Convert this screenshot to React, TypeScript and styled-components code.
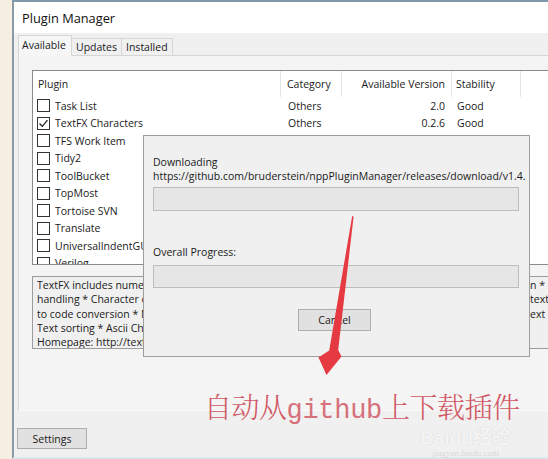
import React from "react";
import styled, { createGlobalStyle } from "styled-components";

const Global = createGlobalStyle`
  html, body { margin: 0; padding: 0; overflow: hidden; }
  body {
    width: 548px; height: 459px; background: #f4efe1;
    font-family: "Open Sans", "Noto Sans", sans-serif;
  }
  #root { position: relative; width: 548px; height: 459px; overflow: hidden; }
`;

const Window = styled.div`
  margin-left: 12px;
  width: 600px;
  height: 459px;
  box-sizing: border-box;
  border-left: 2px solid #8d9aa6;
  border-top: 2px solid #7f98ab;
  border-bottom: 2px solid #dce6ee;
  display: flex;
  flex-direction: column;
  background: #f0f0f0;
`;

const TitleBar = styled.div`
  height: 31px;
  background: #ffffff;
  display: flex;
  align-items: center;
  padding-left: 8px;
  font-size: 12.8px;
  color: #111;
`;

const Body = styled.div`
  flex: 1;
  display: flex;
  flex-direction: column;
  padding: 2px 0 0 4px;
  font-size: 10.5px;
  color: #1a1a1a;
`;

const TabsRow = styled.div`
  display: flex;
  align-items: flex-end;
  height: 21px;
  margin-bottom: -1px;
  position: relative;
  z-index: 1;
`;

const Tab = styled.div<{ $active?: boolean; $w: number }>`
  width: ${(p) => p.$w}px;
  box-sizing: border-box;
  height: ${(p) => (p.$active ? 21 : 18)}px;
  border: 1px solid #d6d6d6;
  border-bottom: ${(p) => (p.$active ? "none" : "1px solid #d6d6d6")};
  border-left: ${(p) => (p.$active ? "1px solid #d6d6d6" : "none")};
  background: ${(p) => (p.$active ? "#f6f6f6" : "#f0f0f0")};
  display: flex;
  align-items: center;
  padding-left: ${(p) => (p.$active ? 3 : 4)}px;
  padding-bottom: ${(p) => (p.$active ? 2 : 0)}px;
  color: #1a1a1a;
`;

const TabPanel = styled.div`
  height: 356px;
  box-sizing: border-box;
  border: 1px solid #d6d6d6;
  border-bottom: 1px solid #fafafa;
  background: #f4f4f4;
  padding: 14px 0 0 13px;
  display: flex;
  flex-direction: column;
  gap: 11px;
`;

const List = styled.div`
  height: 195px;
  box-sizing: border-box;
  border: 1px solid #8a8a8a;
  background: #ffffff;
  overflow: hidden;
`;

const Grid = styled.div`
  display: grid;
  grid-template-columns: 248px 61px 110px 69px 1fr;
`;

const HeadCell = styled.div<{ $align?: "right"; $pl?: number }>`
  height: 26px;
  box-sizing: border-box;
  border-right: 1px solid #e6e6e6;
  display: flex;
  align-items: center;
  justify-content: ${(p) => (p.$align === "right" ? "flex-end" : "flex-start")};
  padding-left: ${(p) => p.$pl ?? 0}px;
  padding-right: ${(p) => (p.$align === "right" ? 6 : 0)}px;
  white-space: nowrap;
  color: #1a1a1a;
`;

const Cell = styled.div<{ $align?: "right"; $pl?: number }>`
  height: 17.5px;
  display: flex;
  align-items: center;
  justify-content: ${(p) => (p.$align === "right" ? "flex-end" : "flex-start")};
  padding-left: ${(p) => p.$pl ?? 0}px;
  padding-right: ${(p) => (p.$align === "right" ? 7 : 0)}px;
  white-space: nowrap;
  overflow: hidden;
`;

const Check = styled.span`
  width: 13px;
  height: 13px;
  box-sizing: border-box;
  border: 1px solid #333;
  background: #fff;
  margin-right: 5px;
  flex: none;
  display: flex;
  align-items: center;
  justify-content: center;
`;

const Desc = styled.div`
  height: 73px;
  box-sizing: border-box;
  border: 1px solid #9c9c9c;
  background: #f0f0f0;
  padding: 1px 0 0 4px;
  line-height: 14.3px;
  overflow: hidden;
`;

const DescLine = styled.div`
  display: grid;
  grid-template-columns: 493px auto;
  white-space: nowrap;
  span { overflow: hidden; }
`;

const Footer = styled.div`
  padding: 17px 0 0 0;
  margin-left: -1px;
`;

const Button = styled.div<{ $w: number; $h: number }>`
  width: ${(p) => p.$w}px;
  height: ${(p) => p.$h}px;
  box-sizing: border-box;
  border: 1px solid #adadad;
  background: #e1e1e1;
  display: flex;
  align-items: center;
  justify-content: center;
  font-size: 10.5px;
  color: #1a1a1a;
`;

const Dialog = styled.div`
  position: absolute;
  left: 143px;
  top: 135px;
  width: 387px;
  height: 222px;
  box-sizing: border-box;
  border: 1px solid #9d9d9d;
  background: #f0f0f0;
  padding: 19px 0 0 9px;
  display: flex;
  flex-direction: column;
  font-size: 10.5px;
  line-height: 14px;
  color: #1a1a1a;
`;

const Bar = styled.div<{ $h: number; $mt: number }>`
  width: 366px;
  height: ${(p) => p.$h}px;
  margin-top: ${(p) => p.$mt}px;
  box-sizing: border-box;
  border: 1px solid #bcbcbc;
  background: #e6e6e6;
`;

const Label = styled.div<{ $mt?: number }>`
  margin-top: ${(p) => p.$mt ?? 0}px;
  white-space: nowrap;
`;

const CancelWrap = styled.div`
  margin: 21px 0 0 145px;
`;

const Overlay = styled.svg`
  position: absolute;
  left: 0;
  top: 0;
  pointer-events: none;
`;

const Caption = styled.div`
  position: absolute;
  left: 204px;
  top: 388px;
  font-family: "Noto Serif CJK SC", "Noto Sans CJK SC", serif;
  font-weight: 300;
  font-size: 28px;
  line-height: 36px;
  color: #d05663;
  white-space: nowrap;
  letter-spacing: -0.5px;
`;

const Mono = styled.span`
  font-family: "Liberation Mono", monospace;
  font-weight: 400;
  font-size: 27px;
  letter-spacing: -0.3px;
  color: #d6707b;
`;

const Watermark = styled.div`
  position: absolute;
  left: 420px;
  top: 427px;
  display: flex;
  flex-direction: column;
  align-items: center;
  pointer-events: none;
`;

const WmBig = styled.div`
  font-family: "Liberation Sans", "Noto Sans CJK SC", sans-serif;
  font-weight: 700;
  font-size: 19px;
  line-height: 21px;
  color: rgba(255, 255, 255, 0.8);
  text-shadow: 0 0 1px rgba(120, 120, 120, 0.3);
`;

const WmSmall = styled.div`
  font-family: "Liberation Serif", serif;
  font-size: 9px;
  line-height: 10px;
  color: rgba(190, 190, 190, 0.5);
`;

type Row = { name: string; cat?: string; ver?: string; stab?: string; checked?: boolean };

const rows: Row[] = [
  { name: "Task List", cat: "Others", ver: "2.0", stab: "Good" },
  { name: "TextFX Characters", cat: "Others", ver: "0.2.6", stab: "Good", checked: true },
  { name: "TFS Work Item" },
  { name: "Tidy2" },
  { name: "ToolBucket" },
  { name: "TopMost" },
  { name: "Tortoise SVN" },
  { name: "Translate" },
  { name: "UniversalIndentGUI" },
  { name: "Verilog" },
];

const descLines: [string, string][] = [
  ["TextFX includes numerous text conversion features: * Quote and Character handli", "n * Convert"],
  ["handling * Character conversion * HTML to code conversion * Insert", "text to"],
  ["to code conversion * Numeric conversion * Fill lines with T", "ext"],
  ["Text sorting * Ascii Chart * Tidy and many more", ""],
  ["Homepage: http://textfx.no-ip.com/textfx/", ""],
];

export default function App() {
  return (
    <>
      <Global />
      <Window>
        <TitleBar>Plugin Manager</TitleBar>
        <Body>
          <TabsRow>
            <Tab $active $w={54}>Available</Tab>
            <Tab $w={50}>Updates</Tab>
            <Tab $w={51}>Installed</Tab>
          </TabsRow>
          <TabPanel>
            <List>
              <Grid>
                <HeadCell $pl={5}>Plugin</HeadCell>
                <HeadCell $pl={6}>Category</HeadCell>
                <HeadCell $align="right">Available Version</HeadCell>
                <HeadCell $pl={4}>Stability</HeadCell>
                <HeadCell />
                {rows.map((r) => (
                  <React.Fragment key={r.name}>
                    <Cell $pl={4}>
                      <Check>
                        {r.checked && (
                          <svg width="11" height="11" viewBox="0 0 11 11">
                            <path d="M1.5 5.5 L4.3 8.3 L9.5 2.2" fill="none" stroke="#222" strokeWidth="1.3" />
                          </svg>
                        )}
                      </Check>
                      {r.name}
                    </Cell>
                    <Cell $pl={7}>{r.cat ?? ""}</Cell>
                    <Cell $align="right">{r.ver ?? ""}</Cell>
                    <Cell $pl={5}>{r.stab ?? ""}</Cell>
                    <Cell />
                  </React.Fragment>
                ))}
              </Grid>
            </List>
            <Desc>
              {descLines.map(([a, b], i) => (
                <DescLine key={i}>
                  <span>{a}</span>
                  <span>{b}</span>
                </DescLine>
              ))}
            </Desc>
          </TabPanel>
          <Footer>
            <Button $w={70} $h={21}>Settings</Button>
          </Footer>
        </Body>
      </Window>

      <Dialog>
        <Label>Downloading</Label>
        <Label>https://github.com/bruderstein/nppPluginManager/releases/download/v1.4.</Label>
        <Bar $h={24} $mt={4} />
        <Label $mt={34}>Overall Progress:</Label>
        <Bar $h={23} $mt={6} />
        <CancelWrap>
          <Button $w={73} $h={22}>Cancel</Button>
        </CancelWrap>
      </Dialog>

      <Overlay width="548" height="459" viewBox="0 0 548 459">
        <path
          d="M352.2 216 L353.6 216.5 L338.2 350 L341.5 356.5 L326.5 375 L318.5 357.5 L329.2 350.5 Z"
          fill="#e63a42"
        />
      </Overlay>

      <Caption>
        自动从<Mono>github</Mono>上下载插件
      </Caption>

      <Watermark>
        <WmBig>Baidu经验</WmBig>
        <WmSmall>jingyan.baidu.com</WmSmall>
      </Watermark>
    </>
  );
}
